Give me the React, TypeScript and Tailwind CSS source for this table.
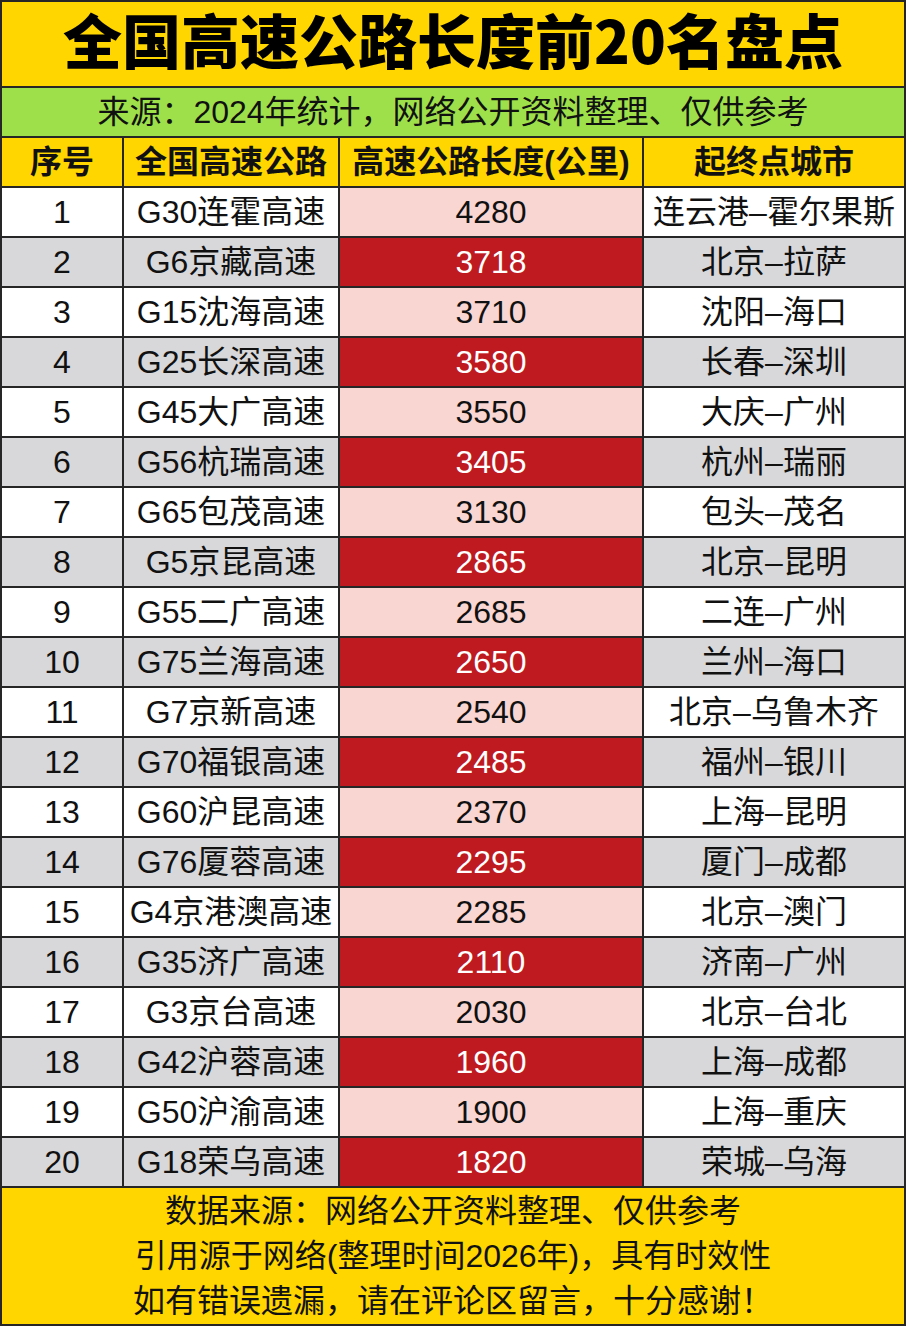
import React from "react"

const rows: [string, string, string][] = [
  ["G30连霍高速", "4280", "连云港–霍尔果斯"],
  ["G6京藏高速", "3718", "北京–拉萨"],
  ["G15沈海高速", "3710", "沈阳–海口"],
  ["G25长深高速", "3580", "长春–深圳"],
  ["G45大广高速", "3550", "大庆–广州"],
  ["G56杭瑞高速", "3405", "杭州–瑞丽"],
  ["G65包茂高速", "3130", "包头–茂名"],
  ["G5京昆高速", "2865", "北京–昆明"],
  ["G55二广高速", "2685", "二连–广州"],
  ["G75兰海高速", "2650", "兰州–海口"],
  ["G7京新高速", "2540", "北京–乌鲁木齐"],
  ["G70福银高速", "2485", "福州–银川"],
  ["G60沪昆高速", "2370", "上海–昆明"],
  ["G76厦蓉高速", "2295", "厦门–成都"],
  ["G4京港澳高速", "2285", "北京–澳门"],
  ["G35济广高速", "2110", "济南–广州"],
  ["G3京台高速", "2030", "北京–台北"],
  ["G42沪蓉高速", "1960", "上海–成都"],
  ["G50沪渝高速", "1900", "上海–重庆"],
  ["G18荣乌高速", "1820", "荣城–乌海"],
]

const font = "font-['Liberation_Sans','Noto_Sans_CJK_SC',sans-serif]"
const cols = "grid grid-cols-[120px_214px_302px_260px] gap-x-[2px]"

export default function App() {
  return (
    <div className={`w-[906px] h-[1326px] bg-[#262626] p-[2px] flex flex-col gap-[2px] ${font}`}>
      {/* 标题 */}
      <div className="h-[84px] bg-[#FFD600] flex items-center justify-center pb-[10px]">
        <h1 className="text-[59px] font-black leading-[1.2] text-black font-['Noto_Sans_CJK_SC',sans-serif]">
          全国高速公路长度前20名盘点
        </h1>
      </div>

      {/* 来源 */}
      <div className="h-[48px] bg-[#9EE04A] flex items-center justify-center text-[32px] leading-none text-[#111]">
        来源：2024年统计，网络公开资料整理、仅供参考
      </div>

      {/* 表头 */}
      <div className={`${cols} h-[48px]`}>
        {["序号", "全国高速公路", "高速公路长度(公里)", "起终点城市"].map((h) => (
          <div key={h} className="bg-[#FFD600] flex items-center justify-center text-[32px] font-bold leading-none text-[#111]">
            {h}
          </div>
        ))}
      </div>

      {/* 数据行 */}
      {rows.map(([name, len, cities], i) => {
        const even = i % 2 === 1
        const base = even ? "bg-[#D8D8DA]" : "bg-white"
        const cell = "flex items-center justify-center text-[32px] leading-none"
        return (
          <div key={name} className={`${cols} h-[48px]`}>
            <div className={`${cell} ${base} text-[#111]`}>{i + 1}</div>
            <div className={`${cell} ${base} text-[#111]`}>{name}</div>
            <div className={`${cell} ${even ? "bg-[#BE1A1F] text-white" : "bg-[#FAD6D2] text-[#111]"}`}>{len}</div>
            <div className={`${cell} ${base} text-[#111]`}>{cities}</div>
          </div>
        )
      })}

      {/* 页脚 */}
      <div className="flex-1 bg-[#FFD600] flex flex-col items-center justify-center text-[32px] leading-[45px] text-[#111]">
        <p>数据来源：网络公开资料整理、仅供参考</p>
        <p>引用源于网络(整理时间2026年)，具有时效性</p>
        <p>如有错误遗漏，请在评论区留言，十分感谢！</p>
      </div>
    </div>
  )
}
